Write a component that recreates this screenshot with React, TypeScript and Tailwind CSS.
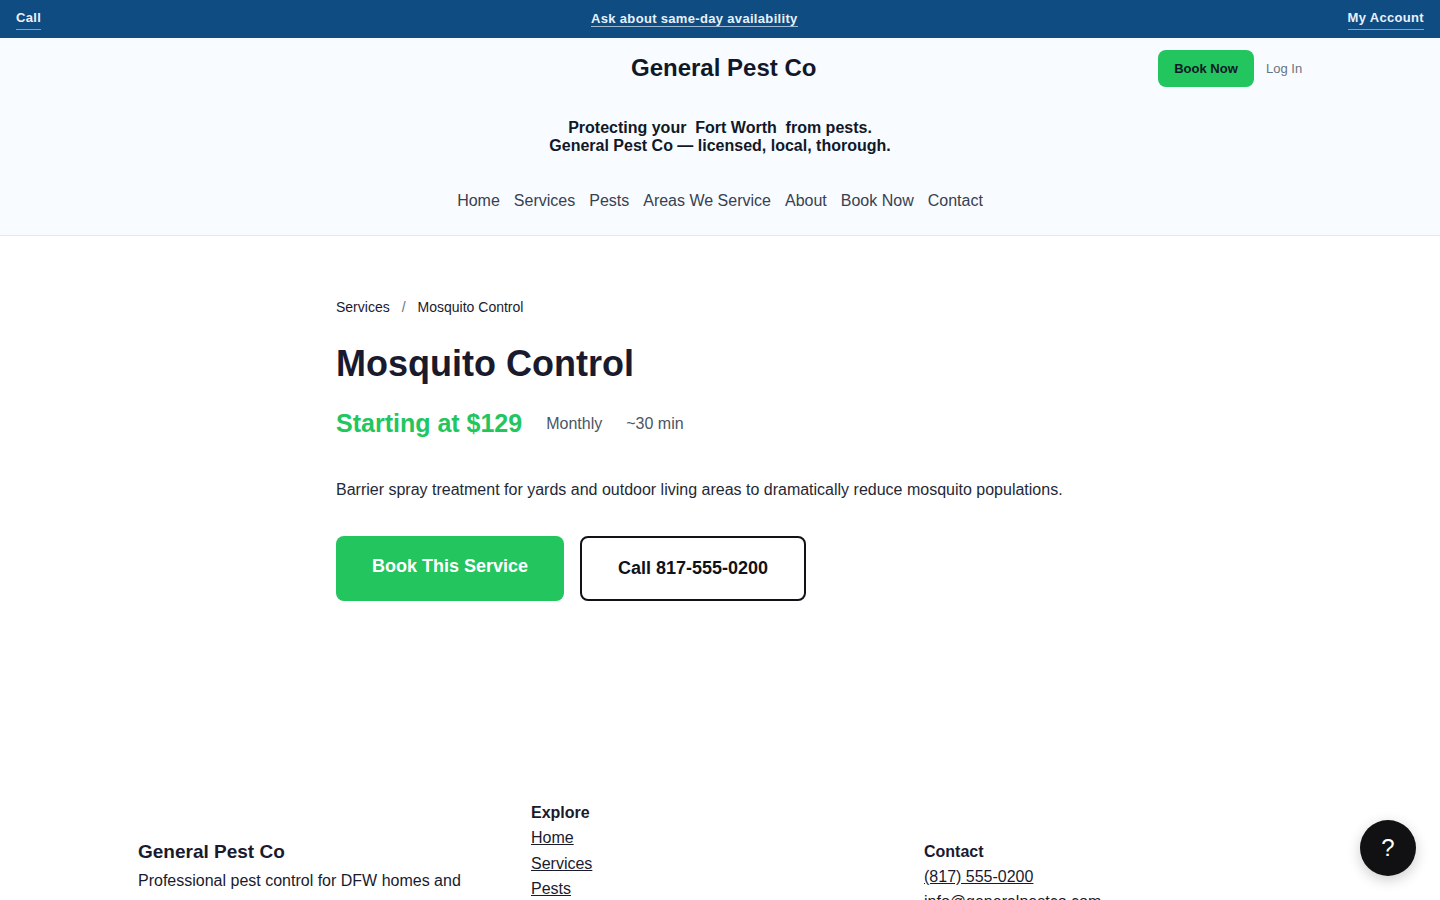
const font = "font-['Liberation_Sans',Arial,sans-serif]";

function FooterLink({ children }: { children: string }) {
  return <a className="block h-[25.6px] leading-[25.6px] underline text-[#1a1a2e]">{children}</a>;
}

export default function App() {
  return (
    <div className={`h-[900px] overflow-hidden relative bg-white ${font}`}>
      <div className="h-[38px] bg-[#0f4c81] flex items-start justify-between px-4 text-[13px] font-bold tracking-[0.325px] text-[#e8f1fb]">
        <a className="mt-[9px] h-[21px] leading-[17px] border-b border-[#7fa3c7]">Call</a>
        <a className="mt-[10px] h-[17px] leading-[17px] border-b border-[#9db8d3] text-[13px]">Ask about same-day availability</a>
        <a className="mt-[9px] h-[21px] leading-[17px] border-b border-[#7fa3c7]">My Account</a>
      </div>
      <header className="h-[198px] bg-[#f8fbff] border-b border-[#e5e7eb] flex flex-col">
        <div className="h-[60px] flex relative">
          <div className="w-full pl-[631px] pt-[14px] text-[24px] leading-[32px] font-bold text-[#111827]">General Pest Co</div>
          <div className="absolute left-[1158px] top-[12px] flex items-center gap-3">
            <a className="h-[37px] w-[96px] rounded-lg bg-[#22c55e] flex items-center justify-center text-[13px] font-bold text-[#111827]">Book Now</a>
            <a className="text-[13px] text-[#6b7280]">Log In</a>
          </div>
        </div>
        <div className="mt-[21px] h-[36px] text-center text-[16px] leading-[18px] font-bold text-[#111827]">
          <div className="pr-0">Protecting your&nbsp; Fort Worth&nbsp; from pests.</div>
          <div>General Pest Co — licensed, local, thorough.</div>
        </div>
        <nav className="mt-[34px] flex justify-center gap-[14px] text-[16px] leading-[24px] text-[#374151]">
          {["Home", "Services", "Pests", "Areas We Service", "About", "Book Now", "Contact"].map((n) => (
            <a key={n}>{n}</a>
          ))}
        </nav>
      </header>
      <main className="w-[768px] ml-[336px] pt-[62px]">
        <div className="flex gap-3 text-[14px] leading-[18px] text-[#1a1a2e]">
          <a>Services</a>
          <span className="text-[#6b7280]">/</span>
          <span>Mosquito Control</span>
        </div>
        <h1 className="mt-[24px] text-[36px] leading-[48px] font-bold text-[#1a1a2e]">Mosquito Control</h1>
        <div className="mt-[20px] flex items-center gap-6 h-[32px]">
          <span className="text-[25px] font-bold text-[#22c55e]">Starting at $129</span>
          <span className="text-[16px] text-[#4b5563]">Monthly</span>
          <span className="text-[16px] text-[#4b5563]">~30 min</span>
        </div>
        <p className="mt-[37px] text-[16px] leading-[26px] text-[#1f2937]">Barrier spray treatment for yards and outdoor living areas to dramatically reduce mosquito populations.</p>
        <div className="mt-[33px] flex gap-4">
          <a className="w-[228px] h-[65px] rounded-lg bg-[#22c55e] text-white text-[18px] font-bold flex items-center justify-center pb-1">Book This Service</a>
          <a className="w-[226px] h-[65px] rounded-lg border-2 border-[#111118] text-[#111118] text-[18px] font-bold flex items-center justify-center">Call 817-555-0200</a>
        </div>
      </main>
      <footer className="absolute left-[138px] top-[800px] w-[1164px] grid grid-cols-[393px_393px_1fr] text-[16px] text-[#1a1a2e]">
        <div className="pt-[39px]">
          <div className="text-[19px] leading-[26px] font-bold">General Pest Co</div>
          <p className="mt-[3px] w-[340px] leading-[26px]">Professional pest control for DFW homes and businesses.</p>
        </div>
        <div>
          <div className="font-bold leading-[25px]">Explore</div>
          <FooterLink>Home</FooterLink>
          <FooterLink>Services</FooterLink>
          <FooterLink>Pests</FooterLink>
        </div>
        <div className="pt-[39px]">
          <div className="font-bold leading-[25px]">Contact</div>
          <a className="block underline leading-[25px]">(817) 555-0200</a>
          <div className="leading-[25px]">info@generalpestco.com</div>
        </div>
      </footer>
      <button className="absolute left-[1360px] top-[820px] w-14 h-14 rounded-full bg-[#111114] text-white text-[24px] flex items-center justify-center shadow-[0_4px_14px_rgba(0,0,0,0.2)]">?</button>
    </div>
  );
}
